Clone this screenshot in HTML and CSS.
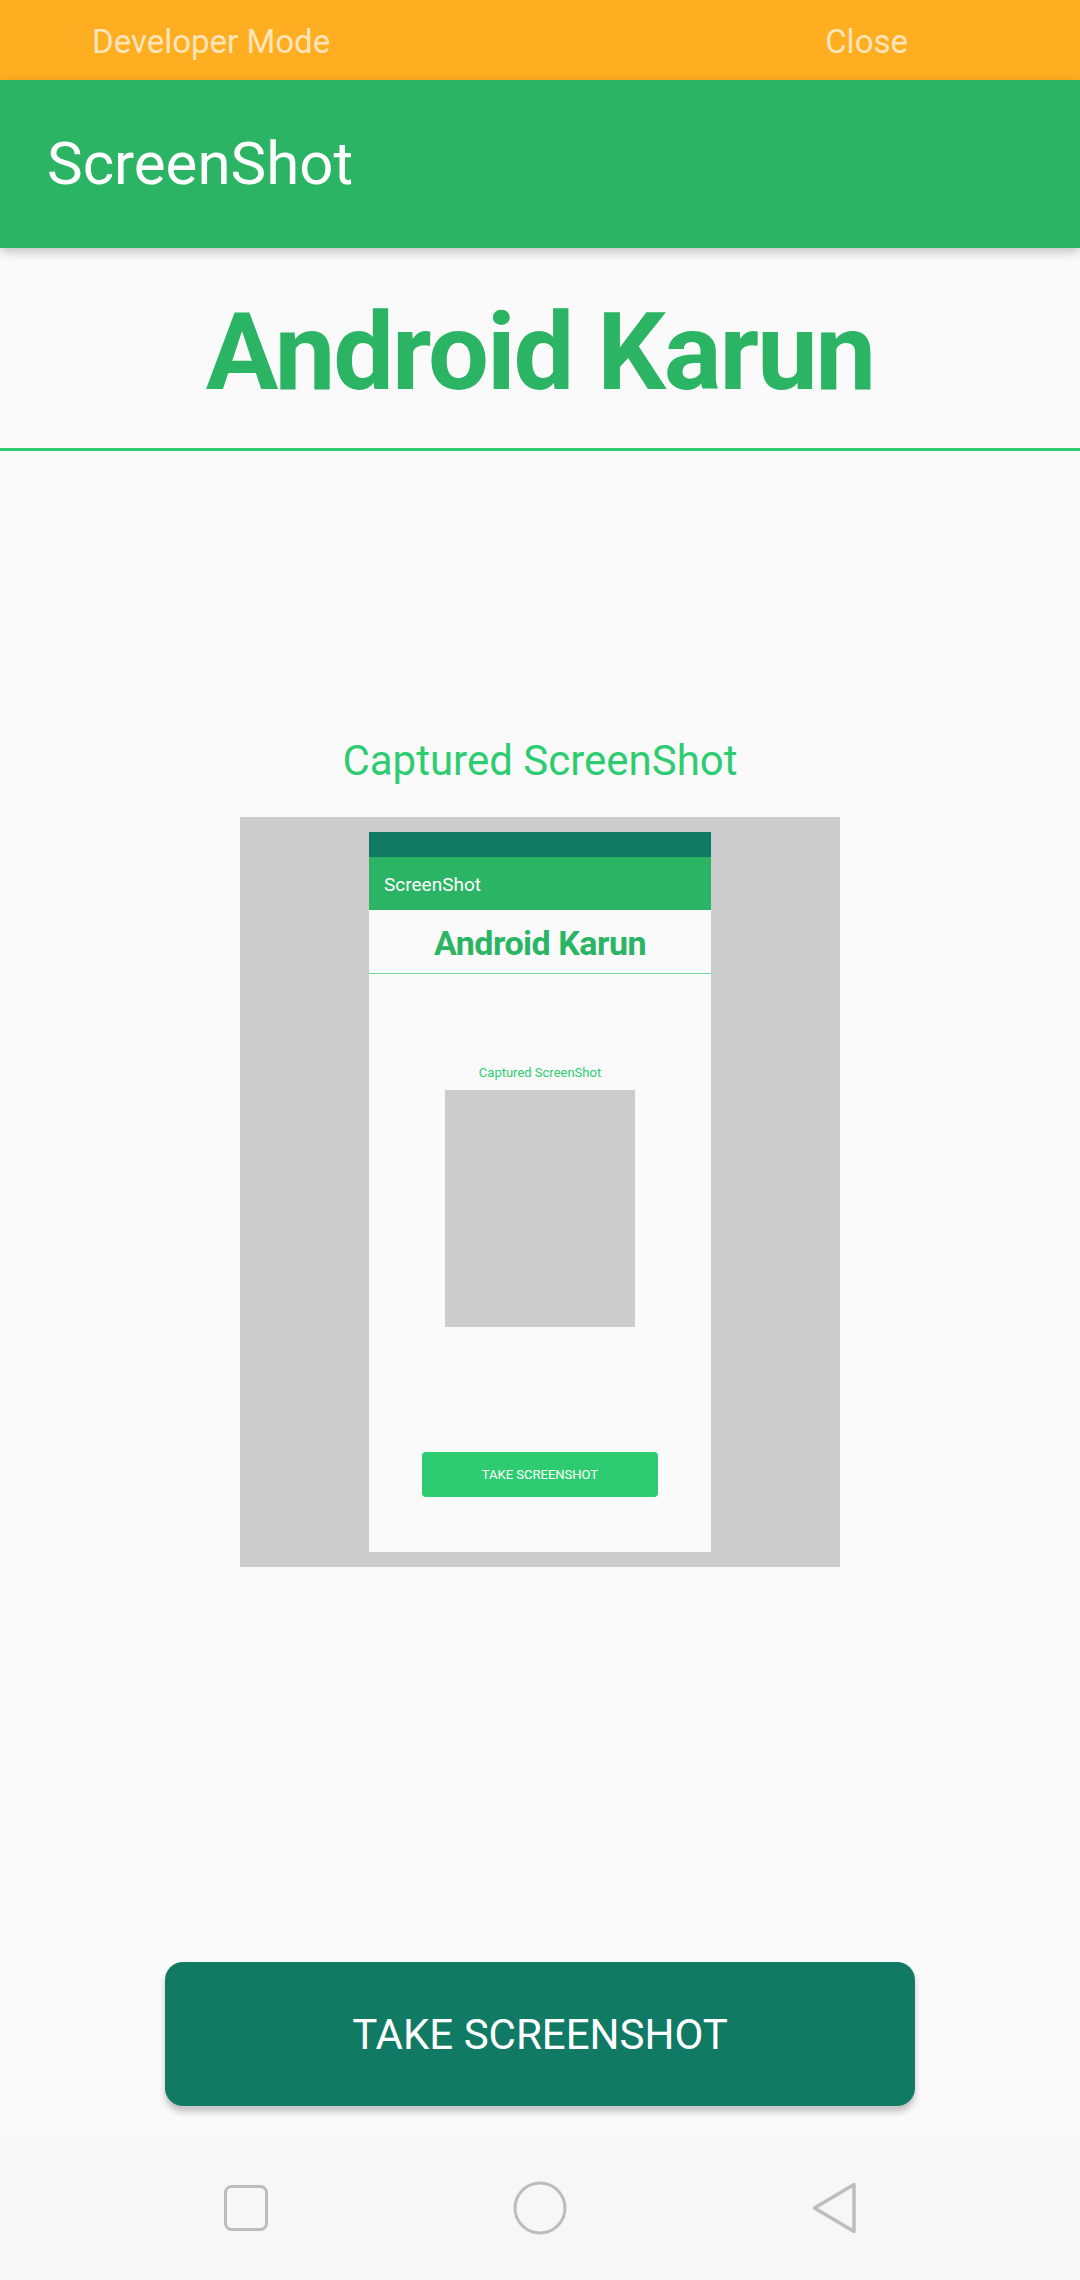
FILE: index.html
```html
<!DOCTYPE html>
<html>
<head>
<meta charset="utf-8">
<link rel="stylesheet" href="styles.css">
</head>
<body>
<div class="screen">
  <div class="devbar">
    <span class="dev-label">Developer Mode</span>
    <span class="dev-close">Close</span>
  </div>
  <div class="appbar"><span class="appbar-title">ScreenShot</span></div>
  <div class="header"><h1 class="brand">Android Karun</h1></div>
  <main class="main">
    <div class="caption">Captured ScreenShot</div>
    <div class="shot-frame">
      <div class="mini">
        <div class="mini-status"></div>
        <div class="mini-appbar"><span class="mini-title">ScreenShot</span></div>
        <div class="mini-header"><div class="mini-brand">Android Karun</div></div>
        <div class="mini-caption">Captured ScreenShot</div>
        <div class="mini-frame"></div>
        <div class="mini-button">TAKE SCREENSHOT</div>
      </div>
    </div>
    <button class="take-btn">TAKE SCREENSHOT</button>
  </main>
  <nav class="navbar">
    <div class="nav-cell">
      <svg width="48" height="50" viewBox="0 0 48 50"><rect x="3.5" y="3.5" width="41" height="43" rx="6" fill="none" stroke="#BDBDBD" stroke-width="3"/></svg>
    </div>
    <div class="nav-cell">
      <svg width="56" height="56" viewBox="0 0 56 56"><circle cx="28" cy="28" r="25" fill="none" stroke="#BDBDBD" stroke-width="3"/></svg>
    </div>
    <div class="nav-cell">
      <svg width="48" height="56" viewBox="0 0 48 56"><path d="M44 4.5 L4.5 28 L44 51.5 Z" fill="none" stroke="#BDBDBD" stroke-width="3.5" stroke-linejoin="round"/></svg>
    </div>
  </nav>
</div>
</body>
</html>
```
FILE: styles.css
```css
html, body {
  margin: 0;
  padding: 0;
}
body {
  background: #FAFAFA;
  font-family: Roboto, "Noto Sans", "Liberation Sans", sans-serif;
}
.screen {
  width: 1080px;
  height: 2280px;
  display: flex;
  flex-direction: column;
  overflow: hidden;
  background: #FAFAFA;
}
.devbar {
  height: 80px;
  flex: none;
  box-sizing: border-box;
  padding: 2px 172px 0 92px;
  background: #FFAD21;
  display: flex;
  align-items: center;
  font-size: 33px;
  color: rgba(255, 255, 255, 0.7);
}
.dev-close {
  margin-left: auto;
}
.appbar {
  height: 168px;
  flex: none;
  background: #2AB463;
  display: flex;
  align-items: center;
  padding-left: 47px;
  box-shadow: 0 4px 10px rgba(0, 0, 0, 0.22);
  position: relative;
  z-index: 1;
}
.appbar-title {
  color: #FFFFFF;
  font-size: 60px;
  line-height: 70px;
}
.header {
  height: 203px;
  flex: none;
  box-sizing: border-box;
  padding-top: 41px;
  border-bottom: 3px solid #2ECC71;
}
.brand {
  margin: 0;
  text-align: center;
  font-size: 108px;
  font-weight: 700;
  line-height: 126px;
  letter-spacing: -2px;
  color: #2AB463;
}
.main {
  flex: 1;
  display: flex;
  flex-direction: column;
  align-items: center;
}
.caption {
  margin-top: 285px;
  font-size: 42px;
  line-height: 49px;
  color: #2ECC71;
}
.shot-frame {
  margin-top: 32px;
  width: 600px;
  height: 750px;
  box-sizing: border-box;
  padding: 15px 0;
  background: #CCCCCC;
  display: flex;
  justify-content: center;
}
.mini {
  width: 342px;
  height: 720px;
  background: #FAFAFA;
  display: flex;
  flex-direction: column;
  align-items: center;
}
.mini-status {
  align-self: stretch;
  height: 25px;
  background: #117A65;
}
.mini-appbar {
  align-self: stretch;
  height: 53px;
  background: #2AB463;
  display: flex;
  align-items: center;
  padding-left: 15px;
}
.mini-title {
  color: #FFFFFF;
  font-size: 19px;
  line-height: 22px;
  padding-top: 2px;
}
.mini-header {
  align-self: stretch;
  height: 64px;
  box-sizing: border-box;
  padding-top: 13px;
  border-bottom: 1px solid #6FDA9C;
}
.mini-brand {
  text-align: center;
  font-size: 34px;
  font-weight: 700;
  line-height: 40px;
  letter-spacing: -0.5px;
  color: #2AB463;
}
.mini-caption {
  margin-top: 91px;
  font-size: 13px;
  line-height: 15px;
  color: #2ECC71;
}
.mini-frame {
  margin-top: 10px;
  width: 190px;
  height: 237px;
  background: #CCCCCC;
}
.mini-button {
  margin-top: 125px;
  width: 236px;
  height: 45px;
  border-radius: 4px;
  background: #2ECC71;
  color: #FFFFFF;
  font-size: 13px;
  display: flex;
  align-items: center;
  justify-content: center;
}
.take-btn {
  margin-top: 395px;
  width: 750px;
  height: 144px;
  border: none;
  border-radius: 18px;
  background: #117A65;
  color: #FFFFFF;
  font-family: Roboto, "Noto Sans", "Liberation Sans", sans-serif;
  font-size: 42px;
  padding: 0;
  box-shadow: 0 6px 6px rgba(0, 0, 0, 0.22);
}
.navbar {
  flex: none;
  height: 144px;
  background: #F7F7F7;
  display: grid;
  grid-template-columns: repeat(3, 294px);
  justify-content: center;
  align-items: center;
}
.nav-cell {
  display: flex;
  justify-content: center;
  align-items: center;
}
.nav-cell svg {
  display: block;
}
```
